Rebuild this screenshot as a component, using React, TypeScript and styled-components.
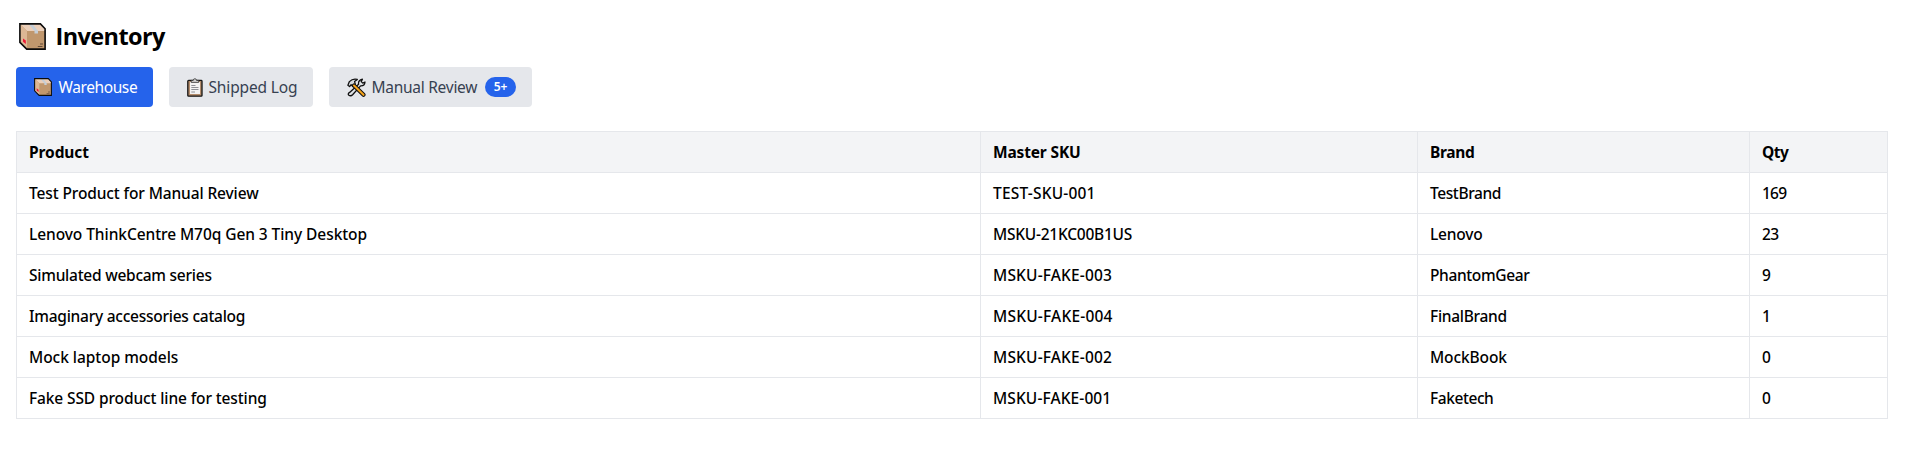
import React from "react";
import styled, { createGlobalStyle } from "styled-components";

const GlobalStyle = createGlobalStyle`
  *, *::before, *::after { box-sizing: border-box; }
  body {
    margin: 0;
    background: #fff;
    color: #000;
    font-family: "Segoe UI", "Noto Sans", "Open Sans", sans-serif;
    font-size: 15.5px;
    line-height: 24px;
  }
`;

const Page = styled.main`
  width: 1904px;
  padding: 20px 16px 16px;
`;

const Title = styled.h1`
  display: flex;
  align-items: center;
  height: 32px;
  margin: 0 0 15px;
  padding-left: 3px;
  gap: 9.5px;
  font-family: "Segoe UI", "Open Sans", sans-serif;
  font-size: 23.5px;
  font-weight: 700;
  letter-spacing: -0.6px;
  line-height: 32px;
`;

const Tabs = styled.nav`
  display: flex;
  gap: 16px;
  margin-bottom: 24px;
`;

const Tab = styled.button<{ $active?: boolean; $width: number; $gap: number }>`
  display: flex;
  align-items: center;
  gap: ${(p) => p.$gap}px;
  width: ${(p) => p.$width}px;
  height: 40px;
  padding: 0 16px 0 18px;
  border: 0;
  border-radius: 4px;
  background: ${(p) => (p.$active ? "#2563eb" : "#e5e7eb")};
  color: ${(p) => (p.$active ? "#fff" : "#374151")};
  font: inherit;
  white-space: nowrap;
`;

const Label = styled.span<{ $track?: number }>`
  letter-spacing: ${(p) => p.$track ?? 0}px;
`;

const Badge = styled.span`
  display: flex;
  align-items: center;
  justify-content: center;
  width: 31px;
  height: 20px;
  margin-left: auto;
  border-radius: 10px;
  background: #2563eb;
  color: #fff;
  font-size: 12px;
  font-weight: 600;
  letter-spacing: -0.1px;
  line-height: 20px;
`;

const Table = styled.table`
  width: 1872px;
  table-layout: fixed;
  border-collapse: collapse;
`;

const cell = `
  height: 41px;
  padding: 0 12px;
  border: 1px solid #e5e7eb;
  text-align: left;
  white-space: nowrap;
`;

const HeadCell = styled.th`
  ${cell}
  background: #f3f4f6;
  font-weight: 700;
`;

const Cell = styled.td`
  ${cell}
  font-weight: 500;
`;

const Icon = styled.svg`
  display: block;
  flex: none;
`;

function BoxIcon({ size }: { size: number }) {
  return (
    <Icon width={size} height={size} viewBox="0 0 27 27">
      <path d="M1 1H21.5L26 6V26H7.6L1 19.4Z" fill="#c0976d" />
      <path d="M1 1H21.5L26 6V8H8Z" fill="#ebcfb9" />
      <path d="M1 1L8 8V26L1 19.4Z" fill="#dcb794" />
      <path d="M9.5 1H13.5L19 8V10.5H15.5V8Z" fill="#c5ced6" />
      <path d="M4 15.5L6.8 17.5V21L4 18.7Z" fill="#ee1835" />
      <path d="M21 21H24M18.8 23.5H23.5" stroke="#604a38" strokeWidth="1.1" />
      <path d="M.9.9H21.4L26.1 5.8V26.1H7.7L.9 19.3Z" fill="none" stroke="#0b0b0b" strokeWidth="1.6" />
    </Icon>
  );
}

function ClipboardIcon() {
  return (
    <Icon width="16" height="19" viewBox="0 0 16 19">
      <rect x=".8" y="2.4" width="14.2" height="15.8" rx=".8" fill="#b58d6c" stroke="#151515" strokeWidth="1.3" />
      <path d="M3 4H13V16H3Z" fill="#f4f3f3" />
      <path d="M4.2 4.4V2.4H6.2Q6.4.7 7.9.7T9.6 2.4H11.7V4.4Z" fill="#d0d0d0" stroke="#333" strokeWidth=".8" />
      <path d="M4.3 7.5H8.5M4.3 9.5H11.5M4.3 11.5H11.5M4.3 14H8" stroke="#8e9096" strokeWidth="1" />
    </Icon>
  );
}

function ToolsIcon() {
  return (
    <Icon width="19" height="19" viewBox="0 0 19 19">
      <path
        d="M2.6 14.4L11.6 6.2Q10.9 2.4 15.4 1.1L14.2 3.6L15.8 5.1L18 4Q17.7 8.1 13.6 7.9L5.6 16.8Q3.8 18.6 1.6 17Q.6 15.6 2.6 14.4Z"
        fill="#dfe3e6"
        stroke="#101010"
        strokeWidth="1.3"
        strokeLinejoin="round"
      />
      <path
        d="M.9 7.2L2.4 3.6Q5.7.2 10.3 1.4L7.6 3.6L8.3 6.2L5.9 8.5L4.1 6.7L2.6 8.6Z"
        fill="#d6dadd"
        stroke="#101010"
        strokeWidth="1.3"
        strokeLinejoin="round"
      />
      <path d="M7 7.5L16.5 16.8" stroke="#101010" strokeWidth="4.1" strokeLinecap="round" />
      <path d="M7 7.5L16.5 16.8" stroke="#f5a31a" strokeWidth="2.1" strokeLinecap="round" />
    </Icon>
  );
}

type Text = [text: string, track: number];

const columns: { label: Text; width: number }[] = [
  { label: ["Product", -0.1], width: 964 },
  { label: ["Master SKU", -0.16], width: 437 },
  { label: ["Brand", -0.32], width: 332 },
  { label: ["Qty", -0.5], width: 138 },
];

const rows: Text[][] = [
  [["Test Product for Manual Review", -0.12], ["TEST-SKU-001", 0.2], ["TestBrand", -0.4], ["169", -0.8]],
  [["Lenovo ThinkCentre M70q Gen 3 Tiny Desktop", -0.07], ["MSKU-21KC00B1US", -0.25], ["Lenovo", -0.18], ["23", -0.6]],
  [["Simulated webcam series", -0.25], ["MSKU-FAKE-003", 0.16], ["PhantomGear", -0.37], ["9", 0]],
  [["Imaginary accessories catalog", -0.25], ["MSKU-FAKE-004", 0.2], ["FinalBrand", -0.29], ["1", 0]],
  [["Mock laptop models", -0.04], ["MSKU-FAKE-002", 0.16], ["MockBook", -0.11], ["0", 0]],
  [["Fake SSD product line for testing", -0.12], ["MSKU-FAKE-001", 0.1], ["Faketech", -0.42], ["0", 0]],
];

export default function App() {
  return (
    <>
      <GlobalStyle />
      <Page>
        <Title>
          <BoxIcon size={27} />
          <span>Inventory</span>
        </Title>
        <Tabs>
          <Tab $active $width={137} $gap={6.5}>
            <BoxIcon size={18} />
            <Label $track={-0.4}>Warehouse</Label>
          </Tab>
          <Tab $width={144} $gap={5.5}>
            <ClipboardIcon />
            <Label $track={-0.15}>Shipped Log</Label>
          </Tab>
          <Tab $width={203} $gap={5.5}>
            <ToolsIcon />
            <Label $track={-0.27}>Manual Review</Label>
            <Badge>5+</Badge>
          </Tab>
        </Tabs>
        <Table>
          <colgroup>
            {columns.map((c) => (
              <col key={c.label[0]} style={{ width: c.width }} />
            ))}
          </colgroup>
          <thead>
            <tr>
              {columns.map(({ label: [text, track] }) => (
                <HeadCell key={text}>
                  <Label $track={track}>{text}</Label>
                </HeadCell>
              ))}
            </tr>
          </thead>
          <tbody>
            {rows.map((row) => (
              <tr key={row[0][0]}>
                {row.map(([text, track], i) => (
                  <Cell key={i}>
                    <Label $track={track}>{text}</Label>
                  </Cell>
                ))}
              </tr>
            ))}
          </tbody>
        </Table>
      </Page>
    </>
  );
}
